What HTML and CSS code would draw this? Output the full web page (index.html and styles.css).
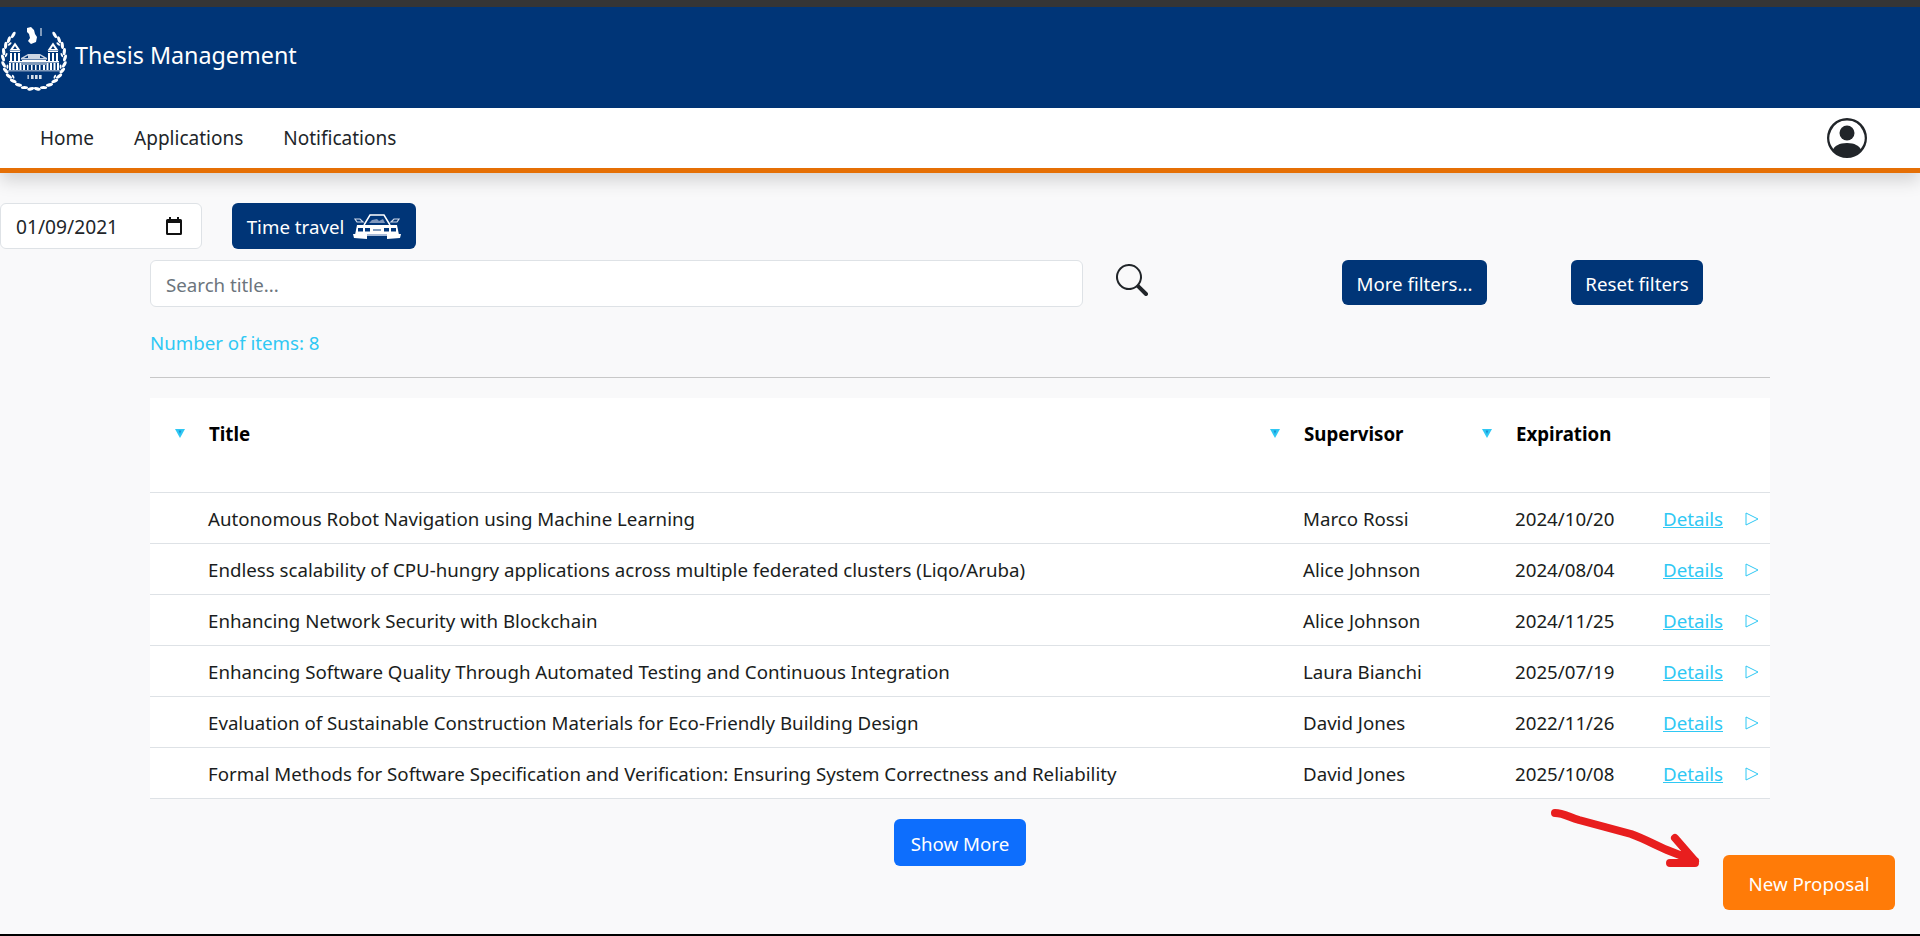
FILE: index.html
```html
<!DOCTYPE html>
<html lang="en">
<head>
<meta charset="utf-8">
<title>Thesis Management</title>
<link rel="stylesheet" href="styles.css">
</head>
<body>
<div class="top-strip"></div>
<header class="brand-bar">
  <svg class="logo" viewBox="0 0 70 70" aria-hidden="true">
    <g fill="#fff">
      <ellipse cx="34" cy="66" rx="3.6" ry="1.6" transform="rotate(6 34 35) rotate(-18 34 66)"/>
      <ellipse cx="34" cy="66" rx="3.6" ry="1.6" transform="rotate(18 34 35) rotate(-18 34 66)"/>
      <ellipse cx="34" cy="66" rx="3.6" ry="1.6" transform="rotate(30 34 35) rotate(-18 34 66)"/>
      <ellipse cx="34" cy="66" rx="3.6" ry="1.6" transform="rotate(42 34 35) rotate(-18 34 66)"/>
      <ellipse cx="34" cy="66" rx="3.6" ry="1.6" transform="rotate(54 34 35) rotate(-18 34 66)"/>
      <ellipse cx="34" cy="66" rx="3.6" ry="1.6" transform="rotate(66 34 35) rotate(-18 34 66)"/>
      <ellipse cx="34" cy="66" rx="3.6" ry="1.6" transform="rotate(78 34 35) rotate(-18 34 66)"/>
      <ellipse cx="34" cy="66" rx="3.6" ry="1.6" transform="rotate(90 34 35) rotate(-18 34 66)"/>
      <ellipse cx="34" cy="66" rx="3.6" ry="1.6" transform="rotate(102 34 35) rotate(-18 34 66)"/>
      <ellipse cx="34" cy="66" rx="3.6" ry="1.6" transform="rotate(114 34 35) rotate(-18 34 66)"/>
      <ellipse cx="34" cy="66" rx="3.6" ry="1.6" transform="rotate(126 34 35) rotate(-18 34 66)"/>
      <ellipse cx="34" cy="66" rx="3.6" ry="1.6" transform="rotate(138 34 35) rotate(-18 34 66)"/>
      <ellipse cx="34" cy="66" rx="3.6" ry="1.6" transform="rotate(-6 34 35) rotate(18 34 66)"/>
      <ellipse cx="34" cy="66" rx="3.6" ry="1.6" transform="rotate(-18 34 35) rotate(18 34 66)"/>
      <ellipse cx="34" cy="66" rx="3.6" ry="1.6" transform="rotate(-30 34 35) rotate(18 34 66)"/>
      <ellipse cx="34" cy="66" rx="3.6" ry="1.6" transform="rotate(-42 34 35) rotate(18 34 66)"/>
      <ellipse cx="34" cy="66" rx="3.6" ry="1.6" transform="rotate(-54 34 35) rotate(18 34 66)"/>
      <ellipse cx="34" cy="66" rx="3.6" ry="1.6" transform="rotate(-66 34 35) rotate(18 34 66)"/>
      <ellipse cx="34" cy="66" rx="3.6" ry="1.6" transform="rotate(-78 34 35) rotate(18 34 66)"/>
      <ellipse cx="34" cy="66" rx="3.6" ry="1.6" transform="rotate(-90 34 35) rotate(18 34 66)"/>
      <ellipse cx="34" cy="66" rx="3.6" ry="1.6" transform="rotate(-102 34 35) rotate(18 34 66)"/>
      <ellipse cx="34" cy="66" rx="3.6" ry="1.6" transform="rotate(-114 34 35) rotate(18 34 66)"/>
      <ellipse cx="34" cy="66" rx="3.6" ry="1.6" transform="rotate(-126 34 35) rotate(18 34 66)"/>
      <ellipse cx="34" cy="66" rx="3.6" ry="1.6" transform="rotate(-138 34 35) rotate(18 34 66)"/>
      <ellipse cx="34" cy="63" rx="2.2" ry="1" transform="rotate(48 34 35) rotate(20 34 63)"/>
      <ellipse cx="34" cy="63" rx="2.2" ry="1" transform="rotate(72 34 35) rotate(20 34 63)"/>
      <ellipse cx="34" cy="63" rx="2.2" ry="1" transform="rotate(96 34 35) rotate(20 34 63)"/>
      <ellipse cx="34" cy="63" rx="2.2" ry="1" transform="rotate(120 34 35) rotate(20 34 63)"/>
      <ellipse cx="34" cy="63" rx="2.2" ry="1" transform="rotate(-48 34 35) rotate(-20 34 63)"/>
      <ellipse cx="34" cy="63" rx="2.2" ry="1" transform="rotate(-72 34 35) rotate(-20 34 63)"/>
      <ellipse cx="34" cy="63" rx="2.2" ry="1" transform="rotate(-96 34 35) rotate(-20 34 63)"/>
      <ellipse cx="34" cy="63" rx="2.2" ry="1" transform="rotate(-120 34 35) rotate(-20 34 63)"/>
      <path d="M27 5l4-1 3 3 1 4 2 3-1 5-5 2-3-3 2-3-1-4-2-2z"/>
      <path d="M40.500 5h1v8h-1z"/>
      <path d="M15 19.500l5.500 8h-11zM15 23l-2 3h4z" fill-rule="evenodd"/>
      <path d="M53 19.500l5.500 8h-11zM53 23l-2 3h4z" fill-rule="evenodd"/>
      <path d="M10 28h10v1H10zM10 30h2v8h-2zM14 30h2v8h-2zM18 30h2v8h-2zM48 28h10v1H48zM48 30h2v8h-2zM52 30h2v8h-2zM56 30h2v8h-2z"/>
      <path d="M21 35l7-4h12l7 4v1.500H21zM24 35l4-2.500v2.500zM44 35l-4-2.500v2.500z" fill-rule="evenodd" opacity=".8"/>
      <path d="M9 38h50v1.500H9zM22 37h24v1H22z"/>
      <path d="M9 40h2v7H9zM12.500 40h2v7h-2zM16 40h2v7h-2zM19.500 40h2v7h-2zM23 42h2v5h-2zM27 42h1.500v5H27zM31 42h1.500v5H31zM35 42h1.500v5H35zM39 42h1.500v5H39zM43 42h2v5h-2zM46.500 40h2v7h-2zM50 40h2v7h-2zM53.500 40h2v7h-2zM57 40h2v7h-2z"/>
      <path d="M22 40.500h24v1H22zM8 47.500h52v.8H8z"/>
      <path d="M27.500 52h1.300v4h-1.300zM31 52h2.600v4H31zM35 52h2.600v4H35zM39 52h2.600v4H39z" opacity=".85"/>
    </g>
  </svg>
  <span class="brand-name">Thesis Management</span>
</header>
<nav class="main-nav">
  <ul class="nav-links">
    <li><a href="#">Home</a></li>
    <li><a href="#">Applications</a></li>
    <li><a href="#">Notifications</a></li>
  </ul>
  <svg class="profile-icon" viewBox="0 0 16 16" fill="#212529" aria-hidden="true">
    <path d="M11 6a3 3 0 1 1-6 0 3 3 0 0 1 6 0"/>
    <path fill-rule="evenodd" d="M0 8a8 8 0 1 1 16 0A8 8 0 0 1 0 8m8-7a7 7 0 0 0-5.468 11.370C3.242 11.226 4.805 10 8 10s4.757 1.225 5.468 2.370A7 7 0 0 0 8 1"/>
  </svg>
</nav>
<main class="content">
  <div class="time-row">
    <div class="date-field">
      <input class="date-input" type="text" value="01/09/2021">
      <svg class="calendar-icon" viewBox="0 0 16 18" aria-hidden="true">
        <path fill="#111" fill-rule="evenodd" d="M3 0h2v2h6V0h2v2h1.500A1.500 1.500 0 0 1 16 3.500v13a1.500 1.500 0 0 1-1.500 1.500h-13A1.500 1.500 0 0 1 0 16.500v-13A1.500 1.500 0 0 1 1.500 2H3zM2 6v10h12V6z"/>
      </svg>
    </div>
    <button class="btn btn-navy time-btn">
      Time travel
      <svg class="car-icon" viewBox="0 0 48 26" aria-hidden="true">
        <path d="M11 12L17 2h14l6 10" fill="none" stroke="#fff" stroke-width="1.500"/>
        <path d="M14 11l4-7h12l4 7z" fill="#00367a"/>
        <path d="M16 10l3-3 5-1 2 2 4-2 2 4z" fill="#7f97bd"/>
        <path d="M2 6h5l3 3H4zM46 6h-5l-3 3h6z" fill="none" stroke="#cfd9ea" stroke-width="1.200"/>
        <path d="M4 12h40l2 10H2z" fill="#fff"/>
        <path d="M5 15h5v3.500H5zM12 15h5v3.500h-5zM31 15h5v3.500h-5zM38 15h5v3.500h-5z" fill="#00367a"/>
        <path d="M20 16.500h8v1h-8z" fill="#00367a"/>
        <path d="M0 21h14v5l-13-1zM48 21H34v5l13-1z" fill="#fff"/>
        <path d="M14 21h20v2H14z" fill="#a9bcd9"/>
      </svg>
    </button>
  </div>

  <div class="filter-row">
    <input class="search-input" type="text" placeholder="Search title...">
    <svg class="search-icon" viewBox="0 0 16 16" fill="#212529" aria-hidden="true">
      <path d="M11.742 10.344a6.500 6.500 0 1 0-1.397 1.398h-.001q.044.06.098.115l3.850 3.850a1 1 0 0 0 1.415-1.414l-3.850-3.850a1 1 0 0 0-.115-.1zM12 6.500a5.500 5.500 0 1 1-11 0 5.500 5.500 0 0 1 11 0"/>
    </svg>
    <button class="btn btn-navy more-btn">More filters...</button>
    <button class="btn btn-navy reset-btn">Reset filters</button>
  </div>

  <div class="list-area">
    <p class="item-count">Number of items: 8</p>
    <hr class="divider">
    <table class="proposal-table">
      <colgroup>
        <col class="col-title"><col class="col-sup"><col class="col-exp"><col class="col-act">
      </colgroup>
      <thead>
        <tr>
          <th><span class="sort-head"><svg class="sort-arrow" viewBox="0 0 10 9"><path d="M0 0h10L5 9z" fill="#2fc8f4"/><path d="M3.600 1.500h2.800L5 5z" fill="#1b8fd0"/></svg>Title</span></th>
          <th><span class="sort-head"><svg class="sort-arrow" viewBox="0 0 10 9"><path d="M0 0h10L5 9z" fill="#2fc8f4"/><path d="M3.600 1.500h2.800L5 5z" fill="#1b8fd0"/></svg>Supervisor</span></th>
          <th><span class="sort-head"><svg class="sort-arrow" viewBox="0 0 10 9"><path d="M0 0h10L5 9z" fill="#2fc8f4"/><path d="M3.600 1.500h2.800L5 5z" fill="#1b8fd0"/></svg>Expiration</span></th>
          <th></th>
        </tr>
      </thead>
      <tbody>
        <tr><td>Autonomous Robot Navigation using Machine Learning</td><td>Marco Rossi</td><td>2024/10/20</td><td><span class="row-action"><a href="#">Details</a><svg class="play-icon" viewBox="0 0 14 14"><path d="M1 1l12 6-12 6z"/></svg></span></td></tr>
        <tr><td>Endless scalability of CPU-hungry applications across multiple federated clusters (Liqo/Aruba)</td><td>Alice Johnson</td><td>2024/08/04</td><td><span class="row-action"><a href="#">Details</a><svg class="play-icon" viewBox="0 0 14 14"><path d="M1 1l12 6-12 6z"/></svg></span></td></tr>
        <tr><td>Enhancing Network Security with Blockchain</td><td>Alice Johnson</td><td>2024/11/25</td><td><span class="row-action"><a href="#">Details</a><svg class="play-icon" viewBox="0 0 14 14"><path d="M1 1l12 6-12 6z"/></svg></span></td></tr>
        <tr><td>Enhancing Software Quality Through Automated Testing and Continuous Integration</td><td>Laura Bianchi</td><td>2025/07/19</td><td><span class="row-action"><a href="#">Details</a><svg class="play-icon" viewBox="0 0 14 14"><path d="M1 1l12 6-12 6z"/></svg></span></td></tr>
        <tr><td>Evaluation of Sustainable Construction Materials for Eco-Friendly Building Design</td><td>David Jones</td><td>2022/11/26</td><td><span class="row-action"><a href="#">Details</a><svg class="play-icon" viewBox="0 0 14 14"><path d="M1 1l12 6-12 6z"/></svg></span></td></tr>
        <tr><td>Formal Methods for Software Specification and Verification: Ensuring System Correctness and Reliability</td><td>David Jones</td><td>2025/10/08</td><td><span class="row-action"><a href="#">Details</a><svg class="play-icon" viewBox="0 0 14 14"><path d="M1 1l12 6-12 6z"/></svg></span></td></tr>
      </tbody>
    </table>
    <div class="more-row"><button class="btn btn-blue">Show More</button></div>
  </div>

  <button class="btn new-proposal">New Proposal</button>
  <svg class="annotation-arrow" viewBox="0 0 160 70" aria-hidden="true">
    <path d="M5 5c8 0 14 4 24 7l52 14c14 5 24 11 36 16l28 11M125 30l20 23M120 55h25" fill="none" stroke="#e81e1e" stroke-width="8" stroke-linecap="round" stroke-linejoin="round"/>
  </svg>
</main>
<div class="bottom-strip"></div>
</body>
</html>
```
FILE: styles.css
```css
* { box-sizing: border-box; }
html, body { margin: 0; height: 100%; }
body {
  display: flex;
  flex-direction: column;
  overflow: hidden;
  font-family: "Noto Sans", "Open Sans", sans-serif;
  font-size: 18.7px;
  color: #212529;
  background: #f9f9fa;
}
.top-strip { height: 7px; background: #353535; flex: none; }
.brand-bar {
  flex: none;
  height: 101px;
  display: flex;
  align-items: center;
  background: #003577;
  color: #fff;
}
.logo { width: 70px; height: 70px; flex: none; }
.brand-name { font-size: 23.3px; margin-left: 5px; margin-bottom: 6px; }
.main-nav {
  flex: none;
  position: relative;
  height: 65px;
  display: flex;
  align-items: center;
  justify-content: space-between;
  padding: 0 53px 0 0;
  background: #fff;
  border-bottom: 5px solid #e56f05;
  box-shadow: 0 8px 16px rgba(0,0,0,.15);
}
.nav-links { list-style: none; margin: 0; padding: 0 0 0 40px; display: flex; gap: 40px; font-size: 19px; }
.nav-links a { color: #212529; text-decoration: none; }
.profile-icon { width: 40px; height: 40px; display: block; }
.content { flex: 1; position: relative; min-height: 0; }
.time-row { display: flex; align-items: stretch; gap: 30px; padding-top: 30px; height: 76px; }
.date-field {
  width: 202px;
  display: flex;
  align-items: center;
  justify-content: space-between;
  padding: 1px 19px 0 15px;
  background: #fff;
  border: 1px solid #dee2e6;
  border-radius: 6px;
}
.date-input { width: 130px; border: 0; outline: 0; padding: 0; font: inherit; font-size: 19.2px; color: #212529; background: transparent; }
.calendar-icon { width: 16px; height: 18px; margin-top: -1px; }
.btn { border: 0; border-radius: 6px; color: #fff; font: inherit; cursor: pointer; padding: 2px 0 0; }
.btn-navy { background: #003577; }
.time-btn { width: 184px; display: flex; align-items: center; justify-content: center; gap: 9px; padding-top: 0; white-space: nowrap; }
.car-icon { width: 48px; height: 26px; flex: none; }
.filter-row { display: flex; align-items: flex-start; padding-left: 150px; margin-top: 11px; height: 47px; }
.search-input {
  width: 933px;
  height: 47px;
  padding: 2px 15px 0;
  border: 1px solid #dee2e6;
  border-radius: 6px;
  background: #fff;
  font: inherit;
  color: #212529;
  outline: 0;
}
.search-input::placeholder { color: #6c757d; opacity: 1; }
.search-icon { width: 32px; height: 32px; margin: 4px 0 0 33px; flex: none; }
.more-btn { width: 145px; height: 45px; margin-left: 194px; flex: none; }
.reset-btn { width: 132px; height: 45px; margin-left: 84px; flex: none; }
.list-area { padding: 0 150px; }
.item-count { margin: 0; padding-top: 22px; height: 70px; line-height: 28px; color: #2fc8f4; }
.divider { margin: 0 0 20px; border: 0; border-top: 1px solid #c8c8c8; height: 1px; }
.proposal-table { width: 100%; table-layout: fixed; border-collapse: collapse; background: #fff; }
.col-title { width: 1095px; }
.col-sup { width: 212px; }
.col-exp { width: 193px; }
.col-act { width: 120px; }
.proposal-table th { height: 94px; padding: 0 0 0 25px; text-align: left; font-weight: 700; color: #000; vertical-align: top; border-bottom: 1px solid #dee2e6; }
.sort-head { display: flex; align-items: center; gap: 24px; margin-top: 23px; }
.sort-arrow { width: 10px; height: 9px; flex: none; }
.proposal-table td { height: 51px; padding: 2px 0 0 58px; border-bottom: 1px solid #dee2e6; white-space: nowrap; color: #1a1d20; }
.proposal-table td:last-child { padding-left: 13px; }
.row-action { display: flex; align-items: center; gap: 22px; }
.row-action a { color: #2fc8f4; }
.play-icon { width: 14px; height: 14px; flex: none; fill: none; stroke: #2fc8f4; stroke-width: 1; }
.more-row { display: flex; justify-content: center; margin-top: 20px; }
.btn-blue { background: #0d6efd; width: 132px; height: 47px; }
.new-proposal {
  position: absolute;
  left: 1723px;
  top: 682px;
  width: 172px;
  height: 55px;
  background: #ff7b08;
}
.annotation-arrow { position: absolute; left: 1550px; top: 635px; width: 160px; height: 70px; }
.bottom-strip { flex: none; height: 2px; background: #000; }
```
